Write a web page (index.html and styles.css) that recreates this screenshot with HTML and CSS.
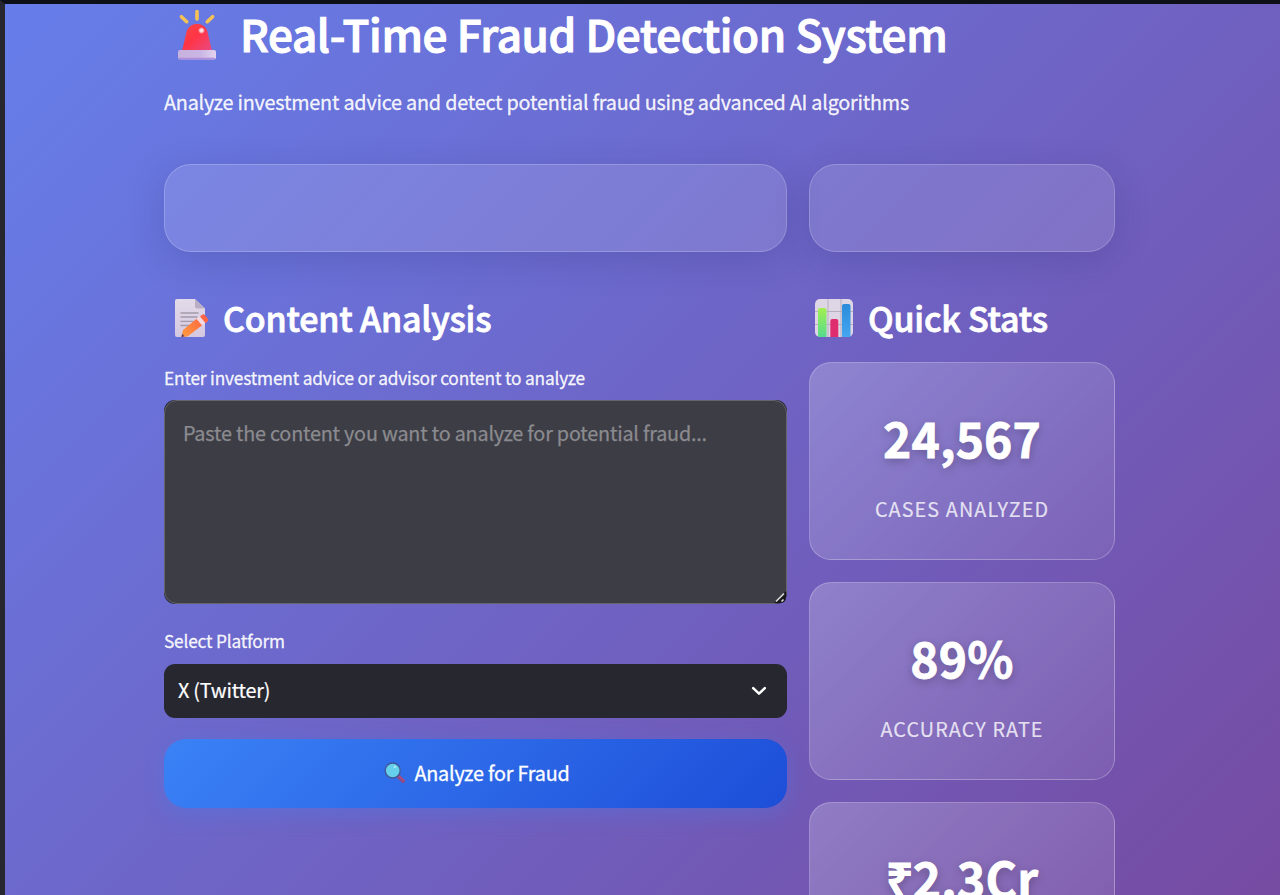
FILE: index.html
```html
<!DOCTYPE html>
<html lang="en">
<head>
<meta charset="utf-8">
<title>Real-Time Fraud Detection System</title>
<link rel="stylesheet" href="styles.css">
</head>
<body>
<div class="app">
  <main class="page">
    <h1 class="title">
      <svg class="siren" viewBox="0 0 40 52">
        <defs>
          <linearGradient id="dome" x1="0" y1="0" x2="1" y2="1"><stop offset="0" stop-color="#f8484c"/><stop offset=".45" stop-color="#ff3544"/><stop offset="1" stop-color="#e84a86"/></linearGradient>
          <linearGradient id="base" x1="0" y1="0" x2="1" y2="0"><stop offset="0" stop-color="#c7b2dc"/><stop offset=".6" stop-color="#cab6e4"/><stop offset="1" stop-color="#e3d3ee"/></linearGradient>
          <radialGradient id="shine"><stop offset="0" stop-color="#fff"/><stop offset=".5" stop-color="#ffc3cb"/><stop offset="1" stop-color="#ff7884" stop-opacity="0"/></radialGradient>
        </defs>
        <g stroke="#f7c255" stroke-width="3.6" stroke-linecap="round"><path d="M20 2.500v7.500"/><path d="M4.400 7.700l5.300 5"/><path d="M35.600 7.700l-5.300 5"/></g>
        <path d="M9.500 23C11 17.500 15 15 20 15s9 2.500 10.500 8L35 42H5z" fill="url(#dome)"/>
        <circle cx="24.500" cy="21.500" r="3.700" fill="url(#shine)"/>
        <rect x="1" y="41" width="38" height="9.500" rx="2" fill="url(#base)"/>
        <path d="M2 49.600h36" stroke="#b18bdc" stroke-width="1.500"/>
      </svg>
      <span>Real-Time Fraud Detection System</span>
    </h1>
    <p class="subtitle">Analyze investment advice and detect potential fraud using advanced AI algorithms</p>
    <div class="columns panels">
      <div class="panel"></div>
      <div class="panel"></div>
    </div>
    <div class="columns">
      <section class="column">
        <h2 class="heading heading-content">
          <svg class="memo" viewBox="0 0 36 40">
            <defs><linearGradient id="paper" x1="0" y1="0" x2="0" y2="1"><stop offset="0" stop-color="#e2dae8"/><stop offset="1" stop-color="#d5c8e2"/></linearGradient>
            <linearGradient id="pencil" x1="1" y1="0" x2="0" y2="1"><stop offset="0" stop-color="#ff6840"/><stop offset="1" stop-color="#ff9c3f"/></linearGradient></defs>
            <path d="M3 1h18l10 9.500V37a2 2 0 0 1-2 2H3a2 2 0 0 1-2-2V3a2 2 0 0 1 2-2z" fill="url(#paper)"/>
            <path d="M21 1l10 9.500h-8a2 2 0 0 1-2-2z" fill="#b9adc6"/>
            <path d="M6.500 15h18M6.500 19h17M6.500 23.300h13M6.500 27.500h9" stroke="#a39ba9" stroke-width="1.300"/>
            <path d="M9 32L23 20.500l5.500 6.500-15 11.500-6 .500z" fill="url(#pencil)"/>
            <path d="M22.500 21l3.500-3 5.500 6.500-3.500 2.800z" fill="#f2d9e2"/>
            <path d="M26 18.400l2-1.700q1.500-1 2.800.400l3 3.600q1.100 1.500-.3 2.700l-2 1.600z" fill="#ff6547"/>
            <path d="M8.300 35.800l2.400 2.800-3.500.400z" fill="#68405c"/>
          </svg>
          <span>Content Analysis</span>
        </h2>
        <label class="label" for="content">Enter investment advice or advisor content to analyze</label>
        <div class="textbox">
          <textarea id="content" class="textarea" placeholder="Paste the content you want to analyze for potential fraud..."></textarea>
          <svg class="grip" viewBox="0 0 12 12"><path d="M0 12L12 0V6q0 6-6 6z" fill="#17171c"/><path d="M2 10.500L10 2.500M7.500 10.500l2-2" stroke="#d8d8d4" stroke-width="1.700"/></svg>
        </div>
        <div class="label label-platform">Select Platform</div>
        <div class="select">
          <span>X (Twitter)</span>
          <svg class="chevron" viewBox="0 0 16 10"><path d="M2.200 2.200L8 7.600l5.800-5.400" fill="none" stroke="#fff" stroke-width="2.500" stroke-linecap="round" stroke-linejoin="round"/></svg>
        </div>
        <button class="analyze">
          <svg class="lens" viewBox="0 0 22 22"><path d="M14.500 14.500l4.500 4.500" stroke="#864b91" stroke-width="4.200" stroke-linecap="round"/><path d="M15 14l4.800 4.500" stroke="#ad537f" stroke-width="1.300" stroke-linecap="round"/><circle cx="8.700" cy="8.500" r="7.500" fill="#66d0ec" stroke="#405794" stroke-width="1.300"/><circle cx="11" cy="5" r="1.300" fill="#a5e8f5"/></svg>
          <span>Analyze for Fraud</span>
        </button>
      </section>
      <section class="column">
        <h2 class="heading heading-stats">
          <svg class="chart" viewBox="0 0 38 38">
            <defs><linearGradient id="green" x1="0" y1="0" x2="0" y2="1"><stop offset="0" stop-color="#a2ef50"/><stop offset="1" stop-color="#55dc8d"/></linearGradient>
            <linearGradient id="blue" x1="0" y1="0" x2="0" y2="1"><stop offset="0" stop-color="#298bda"/><stop offset="1" stop-color="#46a6f1"/></linearGradient></defs>
            <rect width="38" height="38" rx="5" fill="#ded6e5"/>
            <path d="M0 12.500h38M0 25.500h38M13 0v38M26 0v38" stroke="#b7afbf" stroke-width="1"/>
            <path d="M3 38V11q0-2 2-2h4.500q2 0 2 2v27z" fill="url(#green)"/>
            <path d="M15.300 38V22q0-2 2-2h4q2 0 2 2v16z" fill="#df2d70"/>
            <path d="M27 38V7q0-2 2-2h4.500q2 0 2 2v31z" fill="url(#blue)"/>
          </svg>
          <span>Quick Stats</span>
        </h2>
        <div class="stats">
          <div class="stat"><div class="value">24,567</div><div class="caption">CASES ANALYZED</div></div>
          <div class="stat"><div class="value">89%</div><div class="caption">ACCURACY RATE</div></div>
          <div class="stat"><div class="value">₹2.3Cr</div></div>
        </div>
      </section>
    </div>
  </main>
</div>
</body>
</html>
```
FILE: styles.css
```css
* { box-sizing: border-box; }
body {
  margin: 0;
  height: 895px;
  overflow: hidden;
  background: #0e1017;
  color: #fff;
  font-family: "Noto Sans CJK SC", "Open Sans", sans-serif;
}
.app {
  height: 895px;
  border-left: 5px solid #272730;
  border-top: 4px solid #0e1017;
  background: linear-gradient(135deg, #667eea 0%, #764ba2 100%) padding-box;
  overflow: hidden;
}
.page { width: 951px; margin-left: 159px; }
.title {
  display: flex;
  align-items: center;
  height: 57px;
  margin: 0;
  font-size: 44px;
  font-weight: 500;
  line-height: 57px;
  letter-spacing: -0.35px;
  -webkit-text-stroke: 1.1px;
  white-space: nowrap;
}
.title span { padding-top: 2px; }
.siren { width: 40px; height: 52px; margin: 4px 23px 0 13px; }
.subtitle {
  margin: 26px 0 0;
  height: 30px;
  font-size: 19.8px;
  line-height: 30px;
  letter-spacing: -0.21px;
  -webkit-text-stroke: 0.3px;
  color: rgba(255,255,255,.93);
  white-space: nowrap;
}
.columns { display: grid; grid-template-columns: 623px 306px; column-gap: 22px; }
.panels { margin-top: 47px; }
.panel {
  height: 88px;
  border: 1px solid rgba(255,255,255,.2);
  border-radius: 27px;
  background: rgba(255,255,255,.12);
  box-shadow: 0 9px 36px rgba(31,38,100,.19);
}
.heading {
  display: flex;
  align-items: center;
  height: 50px;
  margin: 40px 0 0;
  font-size: 34px;
  font-weight: 500;
  line-height: 50px;
  letter-spacing: -0.2px;
  -webkit-text-stroke: 0.8px;
  white-space: nowrap;
}
.heading span { padding-top: 1px; }
.memo { width: 36px; height: 40px; margin: 2px 13px 0 10px; }
.chart { width: 38px; height: 38px; margin: 2px 15px 0 6px; }
.label {
  display: block;
  height: 26px;
  margin-top: 23px;
  font-size: 17.3px;
  line-height: 26px;
  letter-spacing: -0.17px;
  -webkit-text-stroke: 0.3px;
  color: rgba(255,255,255,.93);
}
.textbox { position: relative; height: 204px; margin-top: 9px; border-radius: 11px; background: #272730; }
.textarea {
  display: block;
  width: 100%;
  height: 100%;
  padding: 16px 18px;
  border: 1px solid #65656a;
  border-radius: 13px;
  background: #3d3d46;
  color: #fff;
  font: 400 19.8px/32px "Noto Sans CJK SC", "Open Sans", sans-serif;
  letter-spacing: -0.2px;
  resize: none;
  outline: 0;
}
.textarea::placeholder { color: #8b8b8f; opacity: 1; -webkit-text-stroke: 0.25px; }
.grip { position: absolute; right: 1px; bottom: 1px; width: 12px; height: 12px; }
.label-platform { margin-top: 24px; letter-spacing: -0.2px; }
.select {
  display: flex;
  align-items: center;
  justify-content: space-between;
  height: 54px;
  margin-top: 9.500px;
  padding: 0 20px 0 14px;
  border-radius: 11px;
  background: #272730;
  font-size: 19.8px;
  letter-spacing: -0.2px;
  -webkit-text-stroke: 0.2px;
}
.select span { padding-bottom: 3px; }
.chevron { width: 16px; height: 10px; }
.analyze {
  display: flex;
  align-items: center;
  justify-content: center;
  width: 100%;
  height: 69px;
  margin-top: 21.500px;
  padding: 0 0 1px 3px;
  border: 0;
  border-radius: 22px;
  background: linear-gradient(135deg, #3b82f6, #1d4ed8);
  box-shadow: 0 6px 22px rgba(59,130,246,.3);
  color: #fff;
  font: 400 19.8px/30px "Noto Sans CJK SC", "Open Sans", sans-serif;
  letter-spacing: -0.2px;
  -webkit-text-stroke: 0.3px;
}
.lens { width: 22px; height: 22px; margin-right: 8px; }
.stats { display: grid; row-gap: 22px; margin-top: 20px; }
.stat {
  height: 198px;
  padding-top: 38px;
  border: 1px solid rgba(255,255,255,.24);
  border-radius: 22px;
  background: linear-gradient(135deg, rgba(255,255,255,.22), rgba(255,255,255,.07));
  text-align: center;
}
.value {
  height: 72px;
  font-size: 48px;
  font-weight: 700;
  line-height: 72px;
  letter-spacing: 0.15px;
  -webkit-text-stroke: 0.8px;
  text-shadow: 0 3px 10px rgba(0,0,0,.25);
}
.caption {
  height: 30px;
  margin-top: 21px;
  font-size: 19.8px;
  line-height: 30px;
  letter-spacing: 1.1px;
  -webkit-text-stroke: 0.2px;
  color: rgba(255,255,255,.78);
}
```
